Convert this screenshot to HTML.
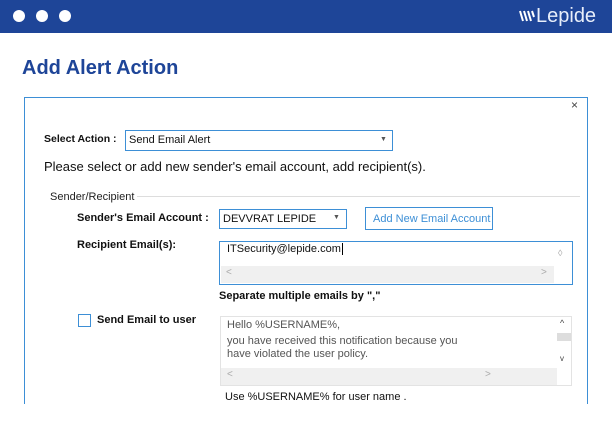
<!DOCTYPE html>
<html><head><style>
*{margin:0;padding:0;box-sizing:border-box}
body{width:612px;height:430px;overflow:hidden;background:#fff;font-family:"Liberation Sans",sans-serif;position:relative;color:#111}
.a{position:absolute;white-space:nowrap}
.b{font-weight:bold;font-size:11px}
</style></head><body>
<div class="a" style="left:0;top:0;width:612px;height:33px;background:#1e4598"></div>
<div class="a" style="left:13px;top:10px;width:12px;height:12px;border-radius:50%;background:#fff"></div>
<div class="a" style="left:36px;top:10px;width:12px;height:12px;border-radius:50%;background:#fff"></div>
<div class="a" style="left:59px;top:10px;width:12px;height:12px;border-radius:50%;background:#fff"></div>
<svg class="a" style="left:519px;top:10px" width="16" height="12" viewBox="0 0 16 12"><g stroke="#fff" stroke-width="2"><path d="M1 1l3 10M5 1l3 10M9 1l3 10M13 1l2 6"/></g></svg>
<div class="a" style="left:536px;top:5px;font-size:20px;color:#e8eefa">Lepide</div>
<div class="a" style="left:22px;top:57px;font-size:20px;font-weight:bold;color:#1e4598">Add Alert Action</div>
<div class="a" style="left:24px;top:97px;width:564px;height:307px;border:1px solid #3d8fd6;border-bottom:none"></div>
<div class="a" style="left:571px;top:98px;font-size:12px;color:#444">×</div>
<div class="a b" style="left:44px;top:133px;font-size:10.5px">Select Action :</div>
<div class="a" style="left:125px;top:130px;width:268px;height:21px;border:1px solid #3d8fd6;font-size:11px;padding:3px 3px">Send Email Alert</div>
<div class="a" style="left:380px;top:136px;font-size:7px;color:#555">▼</div>
<div class="a" style="left:44px;top:159px;font-size:13px">Please select or add new sender's email account, add recipient(s).</div>
<div class="a" style="left:50px;top:191px;font-size:11px;color:#222">Sender/Recipient</div>
<div class="a" style="left:137px;top:196px;width:443px;height:1px;background:#ddd"></div>
<div class="a b" style="left:77px;top:212px">Sender's Email Account :</div>
<div class="a" style="left:219px;top:209px;width:128px;height:20px;border:1px solid #3d8fd6;font-size:11px;padding:3px 3px">DEVVRAT LEPIDE</div>
<div class="a" style="left:333px;top:214px;font-size:7px;color:#555">▼</div>
<div class="a" style="left:365px;top:207px;width:128px;height:23px;border:1px solid #3d8fd6;font-size:11px;color:#3d8fd6;padding:5px 7px">Add New Email Account</div>
<div class="a b" style="left:77px;top:239px">Recipient Email(s):</div>
<div class="a" style="left:219px;top:241px;width:354px;height:44px;border:1px solid #3d8fd6"></div>
<div class="a" style="left:221px;top:266px;width:333px;height:17px;background:#f0f0f0"></div>
<div class="a" style="left:227px;top:243px;font-size:11px">ITSecurity@lepide.com<span style="border-left:1px solid #000;margin-left:1px"></span></div>
<div class="a" style="left:226px;top:267px;font-size:10px;color:#aaa">&lt;</div>
<div class="a" style="left:541px;top:267px;font-size:10px;color:#aaa">&gt;</div>
<div class="a" style="left:558px;top:248px;font-size:9px;color:#aaa">◊</div>
<div class="a b" style="left:219px;top:290px">Separate multiple emails by ","</div>
<div class="a" style="left:78px;top:314px;width:13px;height:13px;border:1px solid #3d8fd6"></div>
<div class="a b" style="left:97px;top:314px">Send Email to user</div>
<div class="a" style="left:220px;top:316px;width:352px;height:70px;border:1px solid #e3e3e3;background:#fff"></div>
<div class="a" style="left:221px;top:368px;width:336px;height:17px;background:#f0f0f0"></div>
<div class="a" style="left:557px;top:317px;width:14px;height:68px;background:#fff"></div>
<div class="a" style="left:557px;top:333px;width:14px;height:8px;background:#ddd"></div>
<div class="a" style="left:560px;top:318px;font-size:9px;color:#444">^</div>
<div class="a" style="left:560px;top:354px;font-size:8px;color:#444">v</div>
<div class="a" style="left:227px;top:319px;font-size:11px;color:#555;line-height:13px">Hello %USERNAME%,</div>
<div class="a" style="left:227px;top:335px;font-size:11px;color:#555;line-height:13px">you have received this notification because you<br>have violated the user policy.</div>
<div class="a" style="left:227px;top:369px;font-size:10px;color:#aaa">&lt;</div>
<div class="a" style="left:485px;top:369px;font-size:10px;color:#aaa">&gt;</div>
<div class="a" style="left:225px;top:391px;font-size:11px">Use %USERNAME% for user name .</div>
</body></html>
